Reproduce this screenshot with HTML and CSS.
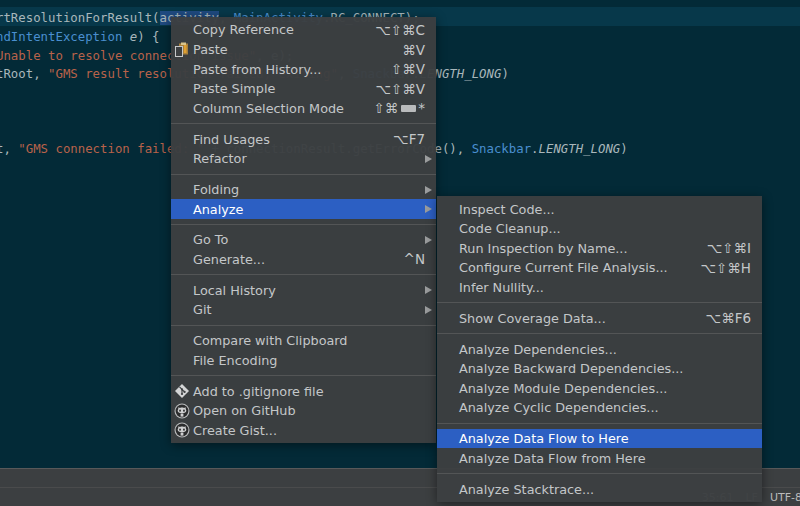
FILE: index.html
```html
<!DOCTYPE html>
<html lang="en">
<head>
    <meta charset="UTF-8">
    <meta name="viewport" content="width=device-width, initial-scale=1.0">
    <title>Analyze menu</title>
    <link rel="stylesheet" href="styles.css">
</head>
<body>
    <svg class="defs" width="0" height="0">
        <symbol id="octo" viewBox="0 0 16 16">
            <circle cx="8" cy="8" r="7.5" fill="#b9bbbc"/>
            <circle cx="8" cy="8" r="6.4" fill="#2b2c2d"/>
            <path d="M4.4 4.2l1.6.7c1.3-.4 2.7-.4 4 0l1.6-.7.2 2c.4.5.5 1 .5 1.6 0 1.6-1.4 2.4-4.3 2.4s-4.3-.8-4.3-2.4c0-.6.1-1.1.5-1.6z" fill="#cfd0d1"/>
            <rect x="5.2" y="6.4" width="1.7" height="2.3" rx=".8" fill="#2b2c2d"/>
            <rect x="9.1" y="6.4" width="1.7" height="2.3" rx=".8" fill="#2b2c2d"/>
            <rect x="6.6" y="10.6" width="2.8" height="3" fill="#cfd0d1"/>
        </symbol>
    </svg>

    <div class="editor">
        <div class="line current">rtResolutionForResult(<span class="sel">activity</span>, <span class="type">MainActivity</span>.RC_CONNECT);</div>
        <div class="line"><span class="type">ndIntentException</span> <i>e</i>) {</div>
        <div class="line"><span class="str">Unable to resolve connection issue"</span>, e);</div>
        <div class="line">tRoot, <span class="str">"GMS result resolution failed, exiting"</span>, <span class="type">Snackbar</span>.<i>LENGTH_LONG</i>)</div>
        <div class="line"></div>
        <div class="line"></div>
        <div class="line"></div>
        <div class="line">t, <span class="str">"GMS connection failed: "</span> + connectionResult.getErrorCode(), <span class="type">Snackbar</span>.<i>LENGTH_LONG</i>)</div>
    </div>

    <div class="status">
        <div class="status-row"></div>
        <div class="status-row status-info">
            <span>35:61</span><span>LF</span><span class="enc">UTF-8</span>
        </div>
    </div>

    <div class="menu menu-main">
        <div class="item"><span>Copy Reference</span><span class="keys">⌥⇧⌘C</span></div>
        <div class="item">
            <svg class="icon" width="15" height="15" viewBox="0 0 15 15">
                <rect x="5" y="1.5" width="9" height="11" fill="#a8803c"/>
                <rect x="7" y="0.5" width="5" height="2.5" fill="#d9c48a"/>
                <rect x="10" y="3" width="2.5" height="8" fill="#e0a030"/>
                <rect x="1.5" y="4.5" width="7" height="10" fill="#3c3f41" stroke="#c6c8c9"/>
            </svg>
            <span>Paste</span><span class="keys">⌘V</span>
        </div>
        <div class="item"><span>Paste from History...</span><span class="keys">⇧⌘V</span></div>
        <div class="item"><span>Paste Simple</span><span class="keys">⌥⇧⌘V</span></div>
        <div class="item">
            <span>Column Selection Mode</span>
            <span class="keys">⇧⌘<span class="kbd"></span>*</span>
        </div>
        <div class="sep"></div>
        <div class="item"><span>Find Usages</span><span class="keys">⌥F7</span></div>
        <div class="item sub"><span>Refactor</span></div>
        <div class="sep"></div>
        <div class="item sub"><span>Folding</span></div>
        <div class="item sub active"><span>Analyze</span></div>
        <div class="sep"></div>
        <div class="item sub"><span>Go To</span></div>
        <div class="item"><span>Generate...</span><span class="keys">^N</span></div>
        <div class="sep"></div>
        <div class="item sub"><span>Local History</span></div>
        <div class="item sub"><span>Git</span></div>
        <div class="sep"></div>
        <div class="item"><span>Compare with Clipboard</span></div>
        <div class="item"><span>File Encoding</span></div>
        <div class="sep"></div>
        <div class="item">
            <svg class="icon" width="16" height="16" viewBox="0 0 16 16">
                <path d="M8 1l7 7-7 7-7-7z" fill="#d4d5d6"/>
                <path d="M5.5 3.8l5 5M8 6.3v5" stroke="#3c3f41" stroke-width="1.2" fill="none"/>
                <circle cx="8" cy="6.3" r="1.1" fill="#3c3f41"/>
                <circle cx="8" cy="11" r="1.1" fill="#3c3f41"/>
                <circle cx="10.6" cy="8.9" r="1.1" fill="#3c3f41"/>
            </svg>
            <span>Add to .gitignore file</span>
        </div>
        <div class="item">
            <svg class="icon" width="16" height="16"><use href="#octo"/></svg>
            <span>Open on GitHub</span>
        </div>
        <div class="item">
            <svg class="icon" width="16" height="16"><use href="#octo"/></svg>
            <span>Create Gist...</span>
        </div>
    </div>

    <div class="menu menu-sub">
        <div class="item"><span>Inspect Code...</span></div>
        <div class="item"><span>Code Cleanup...</span></div>
        <div class="item"><span>Run Inspection by Name...</span><span class="keys">⌥⇧⌘I</span></div>
        <div class="item"><span>Configure Current File Analysis...</span><span class="keys">⌥⇧⌘H</span></div>
        <div class="item"><span>Infer Nullity...</span></div>
        <div class="sep"></div>
        <div class="item"><span>Show Coverage Data...</span><span class="keys">⌥⌘F6</span></div>
        <div class="sep"></div>
        <div class="item"><span>Analyze Dependencies...</span></div>
        <div class="item"><span>Analyze Backward Dependencies...</span></div>
        <div class="item"><span>Analyze Module Dependencies...</span></div>
        <div class="item"><span>Analyze Cyclic Dependencies...</span></div>
        <div class="sep"></div>
        <div class="item active"><span>Analyze Data Flow to Here</span></div>
        <div class="item"><span>Analyze Data Flow from Here</span></div>
        <div class="sep"></div>
        <div class="item"><span>Analyze Stacktrace...</span></div>
    </div>
</body>
</html>
```

FILE: styles.css
```css
* {
  box-sizing: border-box;
}

html, body {
  height: 100%;
}

body {
  margin: 0;
  display: flex;
  flex-direction: column;
  overflow: hidden;
  position: relative;
  background-color: #032a37;
  font-family: "DejaVu Sans", sans-serif;
}

.defs {
  position: absolute;
}

/* code area */
.editor {
  flex: 1;
  padding-top: 7px;
  overflow: hidden;
  font-family: "DejaVu Sans Mono", monospace;
  font-size: 12.35px;
  color: #a9b7bb;
}

.line {
  height: 18.6px;
  line-height: 15.6px;
  padding-top: 4.4px;
  margin-left: -4px;
  white-space: pre;
}

.current {
  background-color: #07384a;
  margin-right: -4px;
}

.sel {
  background-color: #1f4a80;
}

.type {
  color: #4a8fd0;
}

.str {
  color: #b9624a;
}

/* bottom bars */
.status {
  height: 38px;
  flex-shrink: 0;
  background-color: #3c3f41;
  border-top: 1px solid #58595a;
}

.status-row {
  height: 19px;
  border-bottom: 1px solid #4a4b4c;
}

.status-info {
  display: flex;
  justify-content: flex-end;
  align-items: center;
  gap: 12px;
  height: 18px;
  border-bottom: 0;
  margin-right: -2px;
  font-size: 11px;
  color: #bbbbbb;
}

/* popup menus */
.menu {
  position: absolute;
  background-color: rgba(60, 63, 65, 0.97);
  box-shadow: 0 2px 10px rgba(0, 0, 0, 0.45);
  font-size: 12.8px;
  color: #c4c7c9;
}

.menu-main {
  left: 171px;
  top: 17px;
  width: 265px;
  height: 426px;
  padding-top: 3.2px;
}

.menu-sub {
  left: 437px;
  top: 196px;
  width: 325px;
  height: 306px;
  padding-top: 3.4px;
}

.item {
  position: relative;
  height: 19.6px;
  display: flex;
  justify-content: space-between;
  align-items: center;
  padding: 0 11px 0 22px;
  white-space: nowrap;
}

.active {
  background-color: #2c5fc3;
  color: #ffffff;
}

.sub::after {
  content: "";
  border-left: 7px solid #9a9c9d;
  border-top: 4px solid transparent;
  border-bottom: 4px solid transparent;
  margin-right: -7px;
}

.sep {
  height: 11.2px;
  display: flex;
  align-items: center;
}

.sep::before {
  content: "";
  flex: 1;
  height: 1px;
  background-color: #535556;
}

.icon {
  position: absolute;
  left: 3px;
  top: 2px;
}

.keys {
  display: flex;
  align-items: center;
  font-size: 13.5px;
}

.kbd {
  width: 15px;
  height: 7px;
  margin: 0 2px 0 3px;
  background-color: #b9bbbc;
  border-radius: 1px;
}
```
